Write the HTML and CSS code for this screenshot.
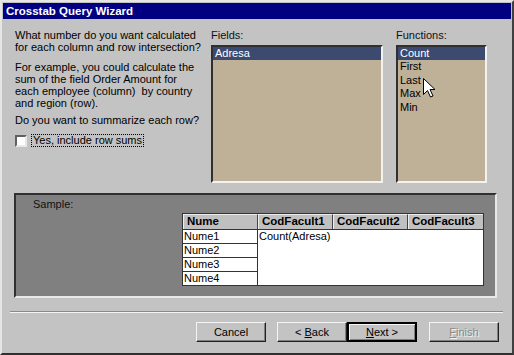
FILE: index.html
```html
<!DOCTYPE html>
<html lang="en">

<head>
    <meta charset="UTF-8">
    <meta name="viewport" content="width=device-width, initial-scale=1.0">
    <title>Crosstab Query Wizard</title>
    <link rel="stylesheet" href="styles.css">
</head>

<body>
    <div class="window">
        <div class="titlebar">Crosstab Query Wizard</div>
        <div class="content">
            <div class="top">
                <div class="intro">
                    <p class="q1">What number do you want calculated<br>for each column and row intersection?</p>
                    <p class="q2">For example, you could calculate the<br>sum of the field Order Amount for<br>each employee (column)&nbsp; by country<br>and region (row).</p>
                    <p class="q3">Do you want to summarize each row?</p>
                    <label class="check">
                        <span class="box"></span>
                        <span class="check-label">Yes, include row sums</span>
                    </label>
                </div>
                <div class="field-col">
                    <div class="label">Fields:</div>
                    <ul class="listbox">
                        <li class="selected">Adresa</li>
                    </ul>
                </div>
                <div class="field-col">
                    <div class="label">Functions:</div>
                    <ul class="listbox functions">
                        <li class="selected">Count</li>
                        <li>First</li>
                        <li>Last</li>
                        <li>Max</li>
                        <li>Min</li>
                        <svg class="cursor" width="13" height="20" viewBox="0 0 13 20">
                            <path d="M0.5 0.5 L0.5 16.5 L4.5 12.5 L7.5 19 L10 18 L7 11.5 L12 11.5 Z" fill="#fff" stroke="#000" stroke-width="1"/>
                        </svg>
                    </ul>
                </div>
            </div>

            <div class="sample">
                <div class="sample-label">Sample:</div>
                <div class="grid">
                    <div class="head">Nume</div>
                    <div class="head">CodFacult1</div>
                    <div class="head">CodFacult2</div>
                    <div class="head last">CodFacult3</div>
                    <div class="name">Nume1</div>
                    <div class="values">Count(Adresa)</div>
                    <div class="name">Nume2</div>
                    <div class="name">Nume3</div>
                    <div class="name">Nume4</div>
                </div>
            </div>

            <div class="separator"></div>

            <div class="buttons">
                <button class="btn">Cancel</button>
                <button class="btn back">&lt; <u>B</u>ack</button>
                <button class="btn default"><u>N</u>ext &gt;</button>
                <button class="btn disabled"><u>F</u>inish</button>
            </div>
        </div>
    </div>
</body>

</html>
```

FILE: styles.css
```css
* {
    box-sizing: border-box;
}

body {
    margin: 0;
    background: #c0c0c0;
    font-family: "Liberation Sans", Arial, sans-serif;
    font-size: 11px;
    color: #000;
}

.window {
    width: 514px;
    height: 355px;
    background: #c3c3c3;
    border: 2px solid;
    border-color: #e6e6e6 #404040 #303030 #e6e6e6;
    padding: 1px;
}

.titlebar {
    height: 16px;
    background: #000080;
    color: #fff;
    font-weight: bold;
    font-size: 11.5px;
    line-height: 16px;
    padding-left: 3px;
}

.content {
    padding: 0 13px 0 11px;
}

.top {
    display: grid;
    grid-template-columns: 195px 172px 102px;
    column-gap: 2px;
    margin-top: 10px;
}

.top .field-col:last-child {
    margin-left: 11px;
}

.intro {
    padding-left: 1px;
    white-space: nowrap;
}

.intro p {
    margin: 0;
    line-height: 12.3px;
}

.q2 {
    margin-top: 7px !important;
}

.q3 {
    margin-top: 4px !important;
}

.check {
    display: flex;
    align-items: center;
    margin-top: 8px;
    gap: 4px;
}

.box {
    width: 12px;
    height: 12px;
    background: #fff;
    border: 2px solid;
    border-color: #606060 #e8e8e8 #e8e8e8 #606060;
}

.check-label {
    border: 1px dotted #000;
    padding: 0 1px;
    line-height: 11px;
}

.label {
    line-height: 12px;
    color: #111;
}

.listbox {
    list-style: none;
    margin: 4px 0 0;
    padding: 0;
    height: 138px;
    background: #bfb197;
    border: 2px solid;
    border-color: #303030 #f2f2f2 #f2f2f2 #303030;
    position: relative;
}

.listbox li {
    line-height: 13.4px;
    padding-left: 2px;
}

.listbox li.selected {
    background: #3b4a6e;
    color: #fff;
}

.functions .cursor {
    position: absolute;
    left: 25px;
    top: 31px;
}

.sample {
    margin-top: 10px;
    width: 483px;
    height: 105px;
    background: #808080;
    border: 2px solid;
    border-color: #303030 #e8e8e8 #e8e8e8 #303030;
    padding: 3px 11px 0 17px;
    display: flex;
    flex-direction: column;
}

.sample-label {
    line-height: 12px;
    color: #111;
}

.grid {
    align-self: flex-end;
    margin-top: 3px;
    display: grid;
    grid-template-columns: 75px 75px 75px 75px;
    grid-template-rows: 15px 14px 14px 14px 14px;
    border: 1px solid #333;
    background: #fff;
}

.head {
    background: #c0c0c0;
    font-weight: bold;
    font-size: 11.5px;
    line-height: 13px;
    padding-left: 3px;
    border-top: 1px solid #eee;
    border-left: 1px solid #eee;
    border-right: 1px solid #444;
}

.head.last {
    border-right: none;
}

.name {
    grid-column: 1;
    line-height: 13px;
    padding-left: 1px;
    border-top: 1px solid #333;
    border-right: 1px solid #333;
    background: #fff;
}

.values {
    grid-column: 2 / 5;
    grid-row: 2 / 6;
    line-height: 13px;
    padding-left: 1px;
    border-top: 1px solid #333;
    background: #fff;
}

.separator {
    margin: 13px 0 0 -4px;
    width: 493px;
    height: 2px;
    border-top: 1px solid #8a8a8a;
    border-bottom: 1px solid #f4f4f4;
}

.buttons {
    display: flex;
    justify-content: flex-end;
    margin: 9px -1px 0 0;
}

.btn {
    width: 70px;
    height: 20px;
    font-family: "Liberation Sans", Arial, sans-serif;
    font-size: 11px;
    color: #000;
    background: #c3c3c3;
    border: 1px solid;
    border-color: #f4f4f4 #202020 #202020 #f4f4f4;
    box-shadow: inset -1px -1px 0 #808080;
    padding: 0;
}

.btn + .btn {
    margin-left: 12px;
}

.btn.back {
    margin-left: 11px;
}

.btn.default {
    margin-left: 0;
    border: 2px solid #000;
    box-shadow: inset 1px 1px 0 #f4f4f4, inset -1px -1px 0 #808080;
}

.btn.disabled {
    color: #8a8a8a;
    text-shadow: 1px 1px 0 #f4f4f4;
}
```
